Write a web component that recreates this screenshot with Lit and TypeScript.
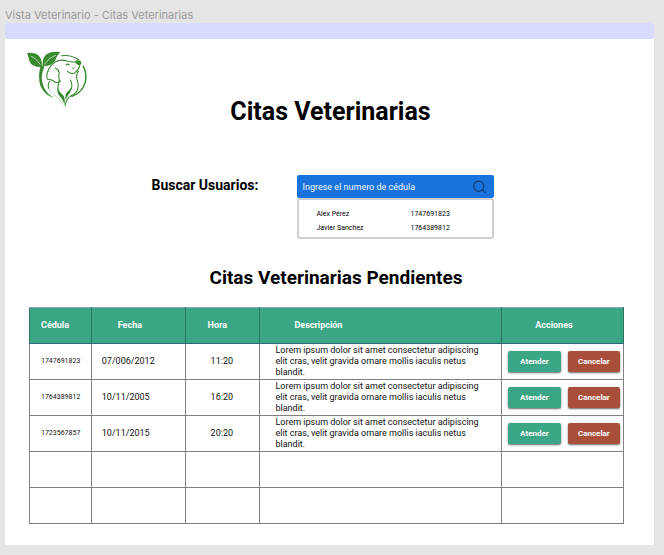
import { LitElement, html, css, svg } from "lit";
import { customElement, property, state } from "lit/decorators.js";

interface Cita {
  cedula: string;
  fecha: string;
  hora: string;
  descripcion: string;
}

const LOREM =
  "Lorem ipsum dolor sit amet consectetur adipiscing elit cras, velit gravida ornare mollis iaculis netus blandit.";

const USUARIOS = [
  { nombre: "Alex Pérez", cedula: "1747691823" },
  { nombre: "Javier Sanchez", cedula: "1764389812" },
];

const CITAS: (Cita | null)[] = [
  { cedula: "1747691823", fecha: "07/006/2012", hora: "11:20", descripcion: LOREM },
  { cedula: "1764389812", fecha: "10/11/2005", hora: "16:20", descripcion: LOREM },
  { cedula: "1723567857", fecha: "10/11/2015", hora: "20:20", descripcion: LOREM },
  null,
  null,
];

const logo = svg`
  <g fill="#378a2e">
    <path d="M36 32 Q60 29 72 41 Q82 51 81 74 Q50 75 43 56 Q41 43 36 32Z"/>
    <path d="M136 29 Q108 25 93 37 Q81 48 83 71 Q108 73 120 55 Q125 40 136 29Z"/>
    <path d="M77 70 Q84 68 88 74 Q74 104 85 131 Q93 152 117 167 Q88 158 77 132 Q67 103 77 70Z"/>
    <path d="M180 57 Q186 51 197 56 Q202 63 194 70 Q184 68 180 57Z"/>
    <path d="M100 128 Q103 149 118 158 Q137 170 148 194 Q136 171 117 158 Q101 147 100 128Z"/>
    <path d="M128 136 Q133 150 143 157 Q151 165 149 186 Q142 168 133 160 Q125 150 128 136Z"/>
    <path d="M169 134 Q169 149 160 157 L151 173 Q150 157 156 150 Q164 144 169 134Z"/>
  </g>
  <g fill="none" stroke="#378a2e" stroke-width="3.2" stroke-linecap="round">
    <path d="M140 40 Q170 37 192 53"/>
    <path d="M205 72 Q221 104 205 134 Q194 154 171 162" stroke-width="4.4"/>
    <path d="M99 86 Q105 68 122 58 Q140 50 156 56 Q168 60 181 59"/>
    <path d="M99 86 Q92 103 98 111 Q110 110 119 119 Q128 124 133 115 Q129 101 133 92 Q130 81 121 77"/>
    <path d="M157 87 Q169 97 180 91 Q191 84 194 70"/>
    <path d="M190 87 Q182 98 186 112 Q193 128 187 143 Q182 155 168 160 Q154 168 150 190"/>
    <path d="M136 115 Q127 126 129 143"/>
    <path d="M105 116 Q97 125 101 138"/>
    <path d="M166 113 Q174 127 168 142"/>
    <path d="M153 67 Q158 63 163 68"/>
    <path d="M171 78 Q176 81 181 75" stroke-width="2"/>
  </g>
  <g fill="none" stroke="#ffffff" stroke-width="2">
    <path d="M48 41 Q66 49 76 67"/>
    <path d="M123 38 Q101 46 88 66"/>
  </g>`;

@customElement("buscador-usuarios")
export class BuscadorUsuarios extends LitElement {
  @state() private texto = "";

  static styles = css`
    :host {
      display: block;
      font-family: Roboto, "Liberation Sans", sans-serif;
    }
    .buscador {
      display: grid;
      grid-template-columns: 108px minmax(0, 197px);
      column-gap: 37px;
      justify-content: center;
      align-items: start;
      padding-right: 8px;
    }
    .etiqueta {
      font-size: 14px;
      font-weight: 700;
      line-height: 20px;
      white-space: nowrap;
    }
    .campo {
      display: flex;
      align-items: center;
      height: 23px;
      padding: 0 6px;
      border-radius: 2px;
      background: #1a73dc;
    }
    .entrada {
      flex: 1;
      min-width: 0;
      padding: 0;
      border: 0;
      outline: 0;
      background: none;
      color: #ffffff;
      font: 400 9px/14px Roboto, "Liberation Sans", sans-serif;
    }
    .entrada::placeholder {
      color: #f0f6fe;
      opacity: 1;
    }
    .lupa {
      display: flex;
      padding: 0;
      border: 0;
      background: none;
      color: #0f3a70;
      cursor: pointer;
    }
    .resultados {
      display: flex;
      flex-direction: column;
      margin: 0;
      padding: 7px 18px 2px;
      border: 2px solid #cfcfd1;
      border-radius: 3px;
      list-style: none;
      font-size: 7px;
      line-height: 14px;
      color: #000000;
    }
    .usuario {
      display: grid;
      grid-template-columns: 94px 1fr;
    }
  `;

  render() {
    const visibles = USUARIOS.filter((u) => u.cedula.startsWith(this.texto));
    return html`
      <div class="buscador">
        <label class="etiqueta" for="cedula">Buscar Usuarios:</label>
        <div>
          <div class="campo">
            <input
              class="entrada"
              id="cedula"
              type="text"
              placeholder="Ingrese el numero de cédula"
              .value=${this.texto}
              @input=${(e: Event) => (this.texto = (e.target as HTMLInputElement).value)}
            />
            <button class="lupa" type="button" aria-label="Buscar">
              <svg width="16" height="16" viewBox="0 0 16 16" fill="none" stroke="currentColor" stroke-width="1.2" stroke-linecap="round">
                <circle cx="6.8" cy="7.2" r="5.1" />
                <path d="M10.5 10.9 L13.2 13.6" />
              </svg>
            </button>
          </div>
          <ul class="resultados">
            ${visibles.map(
              (u) => html`<li class="usuario"><span>${u.nombre}</span><span>${u.cedula}</span></li>`
            )}
          </ul>
        </div>
      </div>
    `;
  }
}

@customElement("tabla-citas")
export class TablaCitas extends LitElement {
  @property({ attribute: false }) citas: (Cita | null)[] = [];

  static styles = css`
    :host {
      display: block;
      font-family: Roboto, "Liberation Sans", sans-serif;
    }
    .tabla {
      width: 100%;
      border-collapse: collapse;
      table-layout: fixed;
      font-size: 9px;
      line-height: 11px;
      color: #111111;
    }
    .col-cedula { width: 10.4%; }
    .col-fecha { width: 15.8%; }
    .col-hora { width: 12.6%; }
    .col-descripcion { width: 40.7%; }
    .titulo,
    .celda {
      box-sizing: border-box;
      height: 36px;
      padding: 0;
      border: 1px solid #808080;
      text-align: left;
      vertical-align: middle;
    }
    .titulo {
      border-color: #2b7560;
      border-top-color: #8fa8c0;
      border-bottom-color: #2b6a80;
      background: #3ba686;
      color: #ffffff;
      font-weight: 700;
    }
    .titulo.cedula,
    .celda.cedula { padding-left: 11px; }
    .titulo.fecha { padding-left: 26px; }
    .titulo.hora { padding-left: 22px; }
    .titulo.descripcion { padding-left: 34px; }
    .titulo.acciones { padding-left: 33px; }
    .celda.cedula { font-size: 7px; }
    .celda.fecha { padding-left: 10px; }
    .celda.hora { padding-left: 25px; }
    .celda.descripcion { padding: 1px 12px 1px 15px; }
    .celda.acciones { padding: 0 3px 0 6px; }
    .botones {
      display: flex;
      gap: 7px;
    }
    .boton {
      flex: 1;
      height: 21px;
      padding: 0;
      border: 0;
      border-radius: 2px;
      box-shadow: 0 1px 2px rgba(0, 0, 0, 0.6);
      color: #ffffff;
      font: 700 8px/12px Roboto, "Liberation Sans", sans-serif;
      cursor: pointer;
    }
    .atender { background: #3ba686; }
    .cancelar { background: #a84e3b; }
  `;

  render() {
    return html`
      <table class="tabla">
        <colgroup>
          <col class="col-cedula" />
          <col class="col-fecha" />
          <col class="col-hora" />
          <col class="col-descripcion" />
          <col />
        </colgroup>
        <thead>
          <tr>
            <th class="titulo cedula" scope="col">Cédula</th>
            <th class="titulo fecha" scope="col">Fecha</th>
            <th class="titulo hora" scope="col">Hora</th>
            <th class="titulo descripcion" scope="col">Descripción</th>
            <th class="titulo acciones" scope="col">Acciones</th>
          </tr>
        </thead>
        <tbody>
          ${this.citas.map(
            (c) => html`
              <tr>
                <td class="celda cedula">${c?.cedula}</td>
                <td class="celda fecha">${c?.fecha}</td>
                <td class="celda hora">${c?.hora}</td>
                <td class="celda descripcion">${c?.descripcion}</td>
                <td class="celda acciones">
                  ${c
                    ? html`<div class="botones">
                        <button class="boton atender" type="button">Atender</button>
                        <button class="boton cancelar" type="button">Cancelar</button>
                      </div>`
                    : null}
                </td>
              </tr>
            `
          )}
        </tbody>
      </table>
    `;
  }
}

@customElement("app-root")
export class AppRoot extends LitElement {
  static styles = css`
    :host {
      display: block;
      box-sizing: border-box;
      min-height: 100vh;
      padding: 8px 10px 10px 5px;
      background: #e5e5e5;
      color: #000000;
      font-family: Roboto, "Liberation Sans", sans-serif;
    }
    .nombre {
      font-family: Inter, Roboto, sans-serif;
      font-size: 11px;
      line-height: 15px;
      color: #999999;
    }
    .barra {
      height: 16px;
      border-radius: 2px;
      background: #d8dbff;
    }
    .marco {
      border-radius: 2px;
      background: #ffffff;
    }
    .contenido {
      padding: 12px 30px 21px 24px;
    }
    .logo {
      display: block;
      margin-left: -2px;
    }
    .principal,
    .secundario {
      margin: 0;
      text-align: center;
      font-weight: 700;
    }
    .principal {
      margin-top: -11px;
      padding-left: 8px;
      font-size: 25px;
      line-height: 32px;
    }
    .secundario {
      padding-left: 19px;
      font-size: 19px;
      line-height: 24px;
    }
    .busqueda {
      margin: 47px 0 27px;
    }
    .citas {
      margin-top: 17px;
    }
  `;

  render() {
    return html`
      <div class="nombre">Vista Veterinario - Citas Veterinarias</div>
      <main class="marco">
        <div class="barra"></div>
        <div class="contenido">
          <svg class="logo" width="61" height="56" viewBox="36 26 183 168" role="img" aria-label="Logo">
            ${logo}
          </svg>
          <h1 class="principal">Citas Veterinarias</h1>
          <buscador-usuarios class="busqueda"></buscador-usuarios>
          <h2 class="secundario">Citas Veterinarias Pendientes</h2>
          <tabla-citas class="citas" .citas=${CITAS}></tabla-citas>
        </div>
      </main>
    `;
  }
}
